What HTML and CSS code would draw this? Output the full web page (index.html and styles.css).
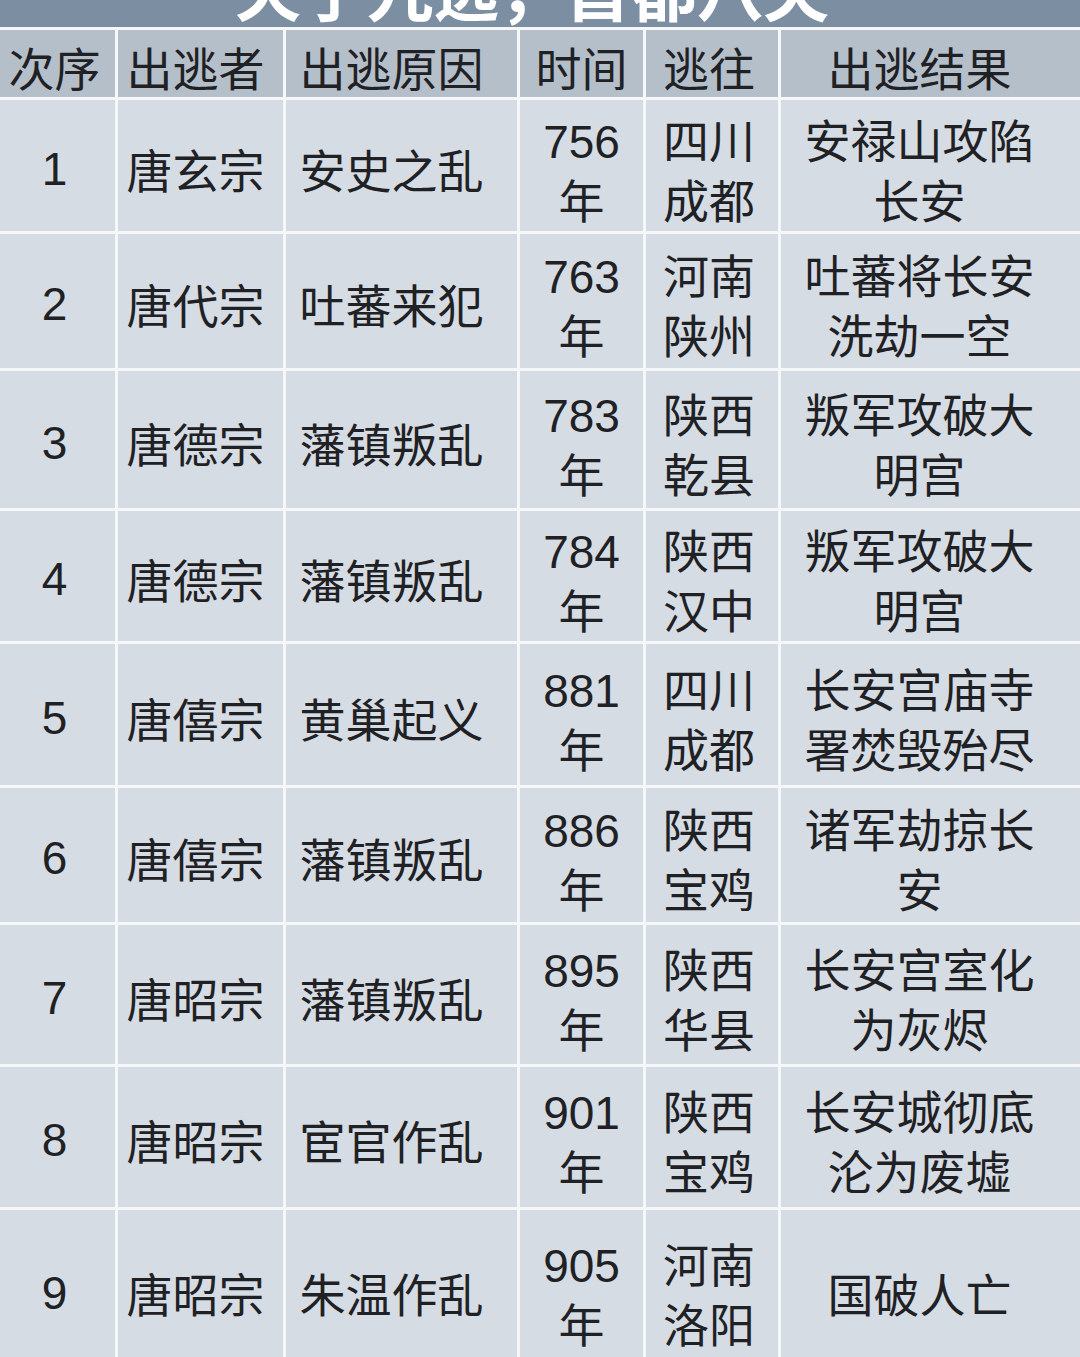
FILE: index.html
```html
<!DOCTYPE html>
<html lang="zh-CN">
<head>
<meta charset="utf-8">
<title>天子九逃，首都八失</title>
<link rel="stylesheet" href="styles.css">
</head>
<body>
<div class="page">
  <div class="title-band"><div class="title">天子九逃，首都八失</div></div>
  <div class="table">
    <div class="cell head c1">次序</div>
    <div class="cell head c2">出逃者</div>
    <div class="cell head c3">出逃原因</div>
    <div class="cell head c4">时间</div>
    <div class="cell head c5">逃往</div>
    <div class="cell head c6">出逃结果</div>

    <div class="cell c1 num">1</div>
    <div class="cell c2">唐玄宗</div>
    <div class="cell c3">安史之乱</div>
    <div class="cell c4">756年</div>
    <div class="cell c5">四川成都</div>
    <div class="cell c6">安禄山攻陷长安</div>

    <div class="cell c1 num">2</div>
    <div class="cell c2">唐代宗</div>
    <div class="cell c3">吐蕃来犯</div>
    <div class="cell c4">763年</div>
    <div class="cell c5">河南陕州</div>
    <div class="cell c6">吐蕃将长安洗劫一空</div>

    <div class="cell c1 num">3</div>
    <div class="cell c2">唐德宗</div>
    <div class="cell c3">藩镇叛乱</div>
    <div class="cell c4">783年</div>
    <div class="cell c5">陕西乾县</div>
    <div class="cell c6">叛军攻破大明宫</div>

    <div class="cell c1 num">4</div>
    <div class="cell c2">唐德宗</div>
    <div class="cell c3">藩镇叛乱</div>
    <div class="cell c4">784年</div>
    <div class="cell c5">陕西汉中</div>
    <div class="cell c6">叛军攻破大明宫</div>

    <div class="cell c1 num">5</div>
    <div class="cell c2">唐僖宗</div>
    <div class="cell c3">黄巢起义</div>
    <div class="cell c4">881年</div>
    <div class="cell c5">四川成都</div>
    <div class="cell c6">长安宫庙寺署焚毁殆尽</div>

    <div class="cell c1 num">6</div>
    <div class="cell c2">唐僖宗</div>
    <div class="cell c3">藩镇叛乱</div>
    <div class="cell c4">886年</div>
    <div class="cell c5">陕西宝鸡</div>
    <div class="cell c6">诸军劫掠长安</div>

    <div class="cell c1 num">7</div>
    <div class="cell c2">唐昭宗</div>
    <div class="cell c3">藩镇叛乱</div>
    <div class="cell c4">895年</div>
    <div class="cell c5">陕西华县</div>
    <div class="cell c6">长安宫室化为灰烬</div>

    <div class="cell c1 num">8</div>
    <div class="cell c2">唐昭宗</div>
    <div class="cell c3">宦官作乱</div>
    <div class="cell c4">901年</div>
    <div class="cell c5">陕西宝鸡</div>
    <div class="cell c6">长安城彻底沦为废墟</div>

    <div class="cell c1 num">9</div>
    <div class="cell c2">唐昭宗</div>
    <div class="cell c3">朱温作乱</div>
    <div class="cell c4">905年</div>
    <div class="cell c5">河南洛阳</div>
    <div class="cell c6">国破人亡</div>
  </div>
</div>
</body>
</html>
```

FILE: styles.css
```css
html, body {
  margin: 0;
  padding: 0;
  background: #f5f7f9;
  overflow: hidden;
}

.page {
  width: 1080px;
  height: 1357px;
  overflow: hidden;
  font-family: "Liberation Sans", "Noto Sans CJK SC", sans-serif;
  color: #1f2124;
}

.title-band {
  height: 27px;
  background: #7c8ea2;
  overflow: hidden;
  margin-bottom: 3px;
}

.title {
  margin-top: -46px;
  padding-right: 16px;
  font-family: "Noto Sans CJK SC", sans-serif;
  font-weight: 700;
  font-size: 66px;
  line-height: 66px;
  color: #ffffff;
  text-align: center;
  white-space: nowrap;
}

.table {
  display: grid;
  grid-template-columns: 115px 165px 231px 123px 132px 299px;
  grid-template-rows: 67px 131px 134px 137px 130px 141px 134px 139px 140px 160px;
  gap: 3px;
}

.cell {
  display: flex;
  align-items: center;
  justify-content: center;
  text-align: center;
  background: #d5dce3;
  font-size: 46px;
  line-height: 60px;
  padding-top: 12px;
  box-sizing: border-box;
}

.cell.head {
  background: #b5bfca;
}

.c1 { padding-right: 6px; }
.c2 { padding-right: 10px; }
.c3 { padding-right: 20px; }
.c4 { padding-left: 6px; padding-right: 6px; }
.c5 { padding-left: 4px; padding-right: 10px; }
.c6 { padding-left: 8px; padding-right: 30px; }

.num {
  padding-top: 6px;
}
```
